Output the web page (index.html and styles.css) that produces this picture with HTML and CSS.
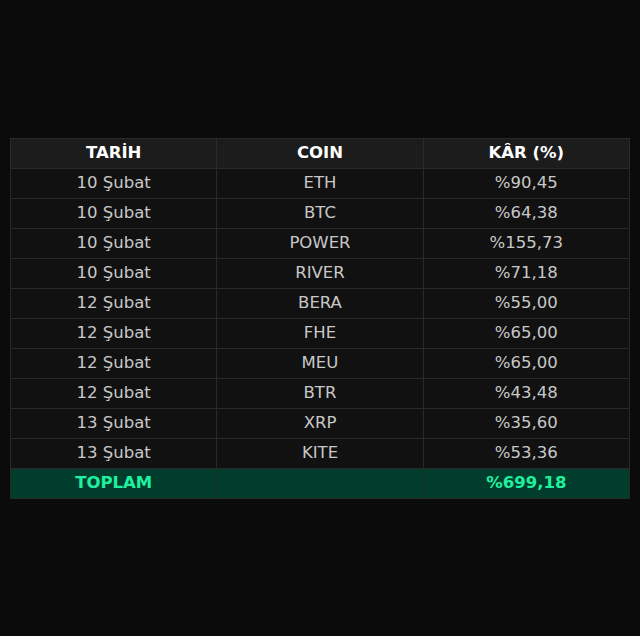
FILE: index.html
```html
<!DOCTYPE html>
<html lang="tr">
<head>
<meta charset="utf-8">
<link rel="stylesheet" href="styles.css">
</head>
<body>
<table class="tbl">
<thead>
<tr><th>TARİH</th><th>COIN</th><th>KÂR (%)</th></tr>
</thead>
<tbody>
<tr><td>10 Şubat</td><td>ETH</td><td>%90,45</td></tr>
<tr><td>10 Şubat</td><td>BTC</td><td>%64,38</td></tr>
<tr><td>10 Şubat</td><td>POWER</td><td>%155,73</td></tr>
<tr><td>10 Şubat</td><td>RIVER</td><td>%71,18</td></tr>
<tr><td>12 Şubat</td><td>BERA</td><td>%55,00</td></tr>
<tr><td>12 Şubat</td><td>FHE</td><td>%65,00</td></tr>
<tr><td>12 Şubat</td><td>MEU</td><td>%65,00</td></tr>
<tr><td>12 Şubat</td><td>BTR</td><td>%43,48</td></tr>
<tr><td>13 Şubat</td><td>XRP</td><td>%35,60</td></tr>
<tr><td>13 Şubat</td><td>KITE</td><td>%53,36</td></tr>
<tr class="total"><td>TOPLAM</td><td></td><td>%699,18</td></tr>
</tbody>
</table>
</body>
</html>
```
FILE: styles.css
```css
html, body {
  margin: 0;
  padding: 0;
  background: #0b0b0b;
}
body {
  height: 636px;
  display: flex;
  align-items: center;
  justify-content: center;
  font-family: "DejaVu Sans", sans-serif;
}
.tbl {
  width: 620px;
  border-collapse: collapse;
  table-layout: fixed;
  font-size: 16.5px;
}
.tbl th, .tbl td {
  height: 29px;
  padding: 0;
  border: 1px solid #2a2a2a;
  text-align: center;
  vertical-align: middle;
  line-height: 18px;
}
.tbl th {
  background: #1c1c1c;
  color: #ffffff;
  font-weight: bold;
}
.tbl td {
  background: #111111;
  color: #c8c8c8;
}
.tbl .total td {
  background: #003d2c;
  color: #1ff0a0;
  font-weight: bold;
}
```
